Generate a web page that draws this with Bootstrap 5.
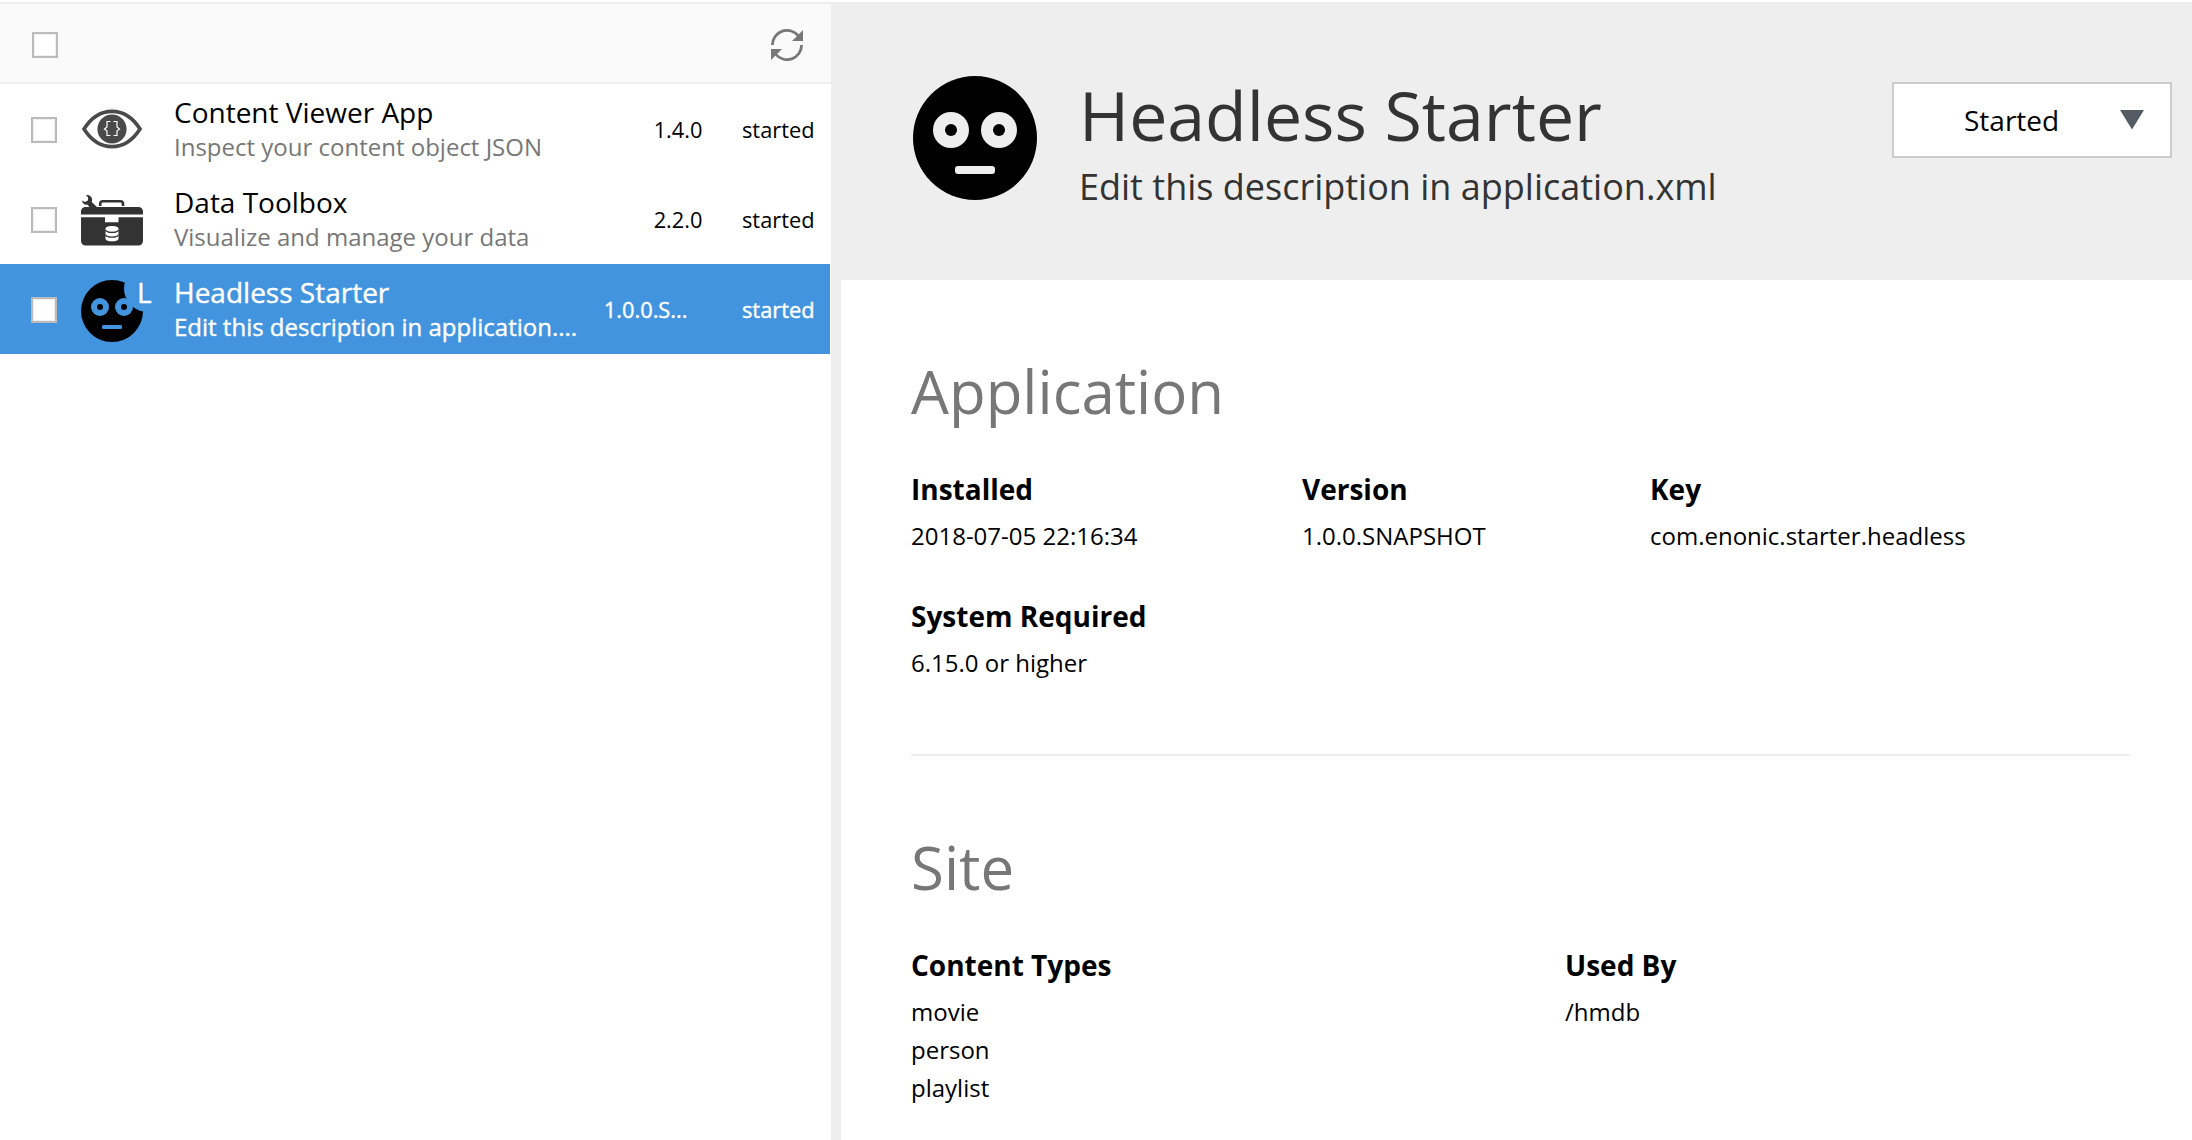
<!DOCTYPE html>
<html lang="en">
<head>
<meta charset="utf-8">
<title>Applications</title>
<link href="https://cdn.jsdelivr.net/npm/bootstrap@5.3.0/dist/css/bootstrap.min.css" rel="stylesheet">
<style>
  body { font-family: "Open Sans", sans-serif; color: #000; height: 1140px; overflow: hidden; background: #fff; }
  .app-frame { height: 1140px; padding-top: 2px; }
  .side-pane { width: 831px; }
  .side-toolbar { height: 82px; background: #fafafa; border-top: 2px solid #eee; border-bottom: 2px solid #eee; padding: 4px 28px 0 32px; }
  .tick-box { width: 26px; height: 26px; border: 2px solid #bbb; background: #fff; box-shadow: inset 0 0 0 1px #f0f0f0; }
  .app-row { height: 90px; width: 830px; padding: 0 15.5px 0 31px; }
  .app-row .tick-box { margin-top: 2px; }
  .app-row.is-selected { background: #4294de; color: #fff; -webkit-text-stroke: .4px #fff; }
  .app-icon { width: 62px; height: 90px; margin-left: 24px; }
  .app-text { width: 406px; margin-left: 31px; margin-bottom: 1px; }
  .app-name { font-size: 28px; line-height: 38px; margin-bottom: -1px; }
  .app-desc { font-size: 24px; line-height: 34px; color: #777; }
  .is-selected .app-desc { color: #fff; }
  .app-version, .app-state { font-size: 21.8px; line-height: 30px; margin-top: 2px; }
  .app-version { margin-left: auto; }
  .app-state { width: 112px; }
  .is-selected .app-state { width: 127px; }
  .local-flag { left: 56px; top: 9px; font-size: 28px; line-height: 38px; }
  .splitter { width: 10px; background: #eee; }
  .detail-head { height: 278px; background: #eee; padding: 74px 20px 0 72px; color: #333; }
  .detail-names { margin-left: 42px; }
  .detail-title { font-size: 68px; line-height: 70px; margin-top: 4px; }
  .detail-sub { font-size: 36px; line-height: 46px; margin-top: 14px; }
  .state-btn { width: 280px; height: 76px; border: 2px solid #ccc; background: #fff; margin-top: 6px; padding: 0 26px 0 70px; font-size: 28px; color: #000; }
  .detail-body { padding: 81px 62px 0 70px; }
  .sec-title { font-size: 60px; line-height: 60px; color: #777; margin-bottom: 49px; }
  .field-name { font-size: 28px; line-height: 38px; font-weight: 700; margin-bottom: 9px; }
  .field-value { font-size: 24px; line-height: 38px; }
  .field-row-next { margin-top: 42px; }
  .sec-rule { height: 2px; background: #eee; margin: 72px 0 81px; }
  .w-a { width: 391px; } .w-b { width: 348px; } .w-c { width: 654px; }
</style>
<script src="https://cdn.jsdelivr.net/npm/bootstrap@5.3.0/dist/js/bootstrap.bundle.min.js"></script>
</head>
<body>
<div class="app-frame d-flex">
  <aside class="side-pane flex-shrink-0">
    <div class="side-toolbar d-flex align-items-center justify-content-between">
      <span class="tick-box"></span>
      <svg width="32" height="32" viewBox="0 0 32 32"><g fill="none" stroke="#777" stroke-width="2.8"><path d="M1.4 16A14.6 14.6 0 0 1 27.5 7"/><path d="M30.6 16A14.6 14.6 0 0 1 4.5 25"/></g><path fill="#777" d="M32 1v11H21zM0 31V20h11z"/></svg>
    </div>
    <div class="app-row d-flex align-items-center">
      <span class="tick-box flex-shrink-0"></span>
      <svg class="app-icon flex-shrink-0" viewBox="0 0 62 90"><path d="M3 45C18 21.500 44 21.500 59 45C44 68.500 18 68.500 3 45z" fill="#fff" stroke="#4a4a4a" stroke-width="3.600"/><circle cx="31" cy="45" r="14.600" fill="#4a4a4a"/><path d="M29.500 37.500h-3.500v5.500l-2.500 2 2.500 2V51.500h3.500M32.500 37.500h3.500v5.500l2.500 2-2.500 2V51.500h-3.500" fill="none" stroke="#fff" stroke-width="1.200"/></svg>
      <div class="app-text"><div class="app-name text-truncate">Content Viewer App</div><div class="app-desc text-truncate">Inspect your content object JSON</div></div>
      <div class="app-version">1.4.0</div><div class="app-state text-end">started</div>
    </div>
    <div class="app-row d-flex align-items-center">
      <span class="tick-box flex-shrink-0"></span>
      <svg class="app-icon flex-shrink-0" viewBox="0 0 62 90"><g fill="#333"><path d="M0 40.500v-3a4.500 4.500 0 0 1 4.500-4.500h53a4.500 4.500 0 0 1 4.500 4.500v3z"/><path d="M0 43.300h24v5h13.500v-5H62V67a4.500 4.500 0 0 1-4.500 4.500h-53A4.500 4.500 0 0 1 0 67z"/><path d="M9.500 34 6.200 30.600C3.500 31 1.300 29.200.9 26.400l3.200 1.600 2.800-1.400.2-3-2-2.400c3.600-.6 6.400 2 6 5.400l-.4 1.500L17 34z"/></g><path d="M19.200 32v-2a2.700 2.700 0 0 1 2.700-2.700h17.400a2.700 2.700 0 0 1 2.700 2.700v2" fill="none" stroke="#333" stroke-width="2.600"/><path d="M24.500 54.500c0-3.500 13-3.500 13 0v10c0 3.800-13 3.800-13 0z" fill="#fff"/><path d="M24.500 56c1 3.200 12 3.200 13 0M24.500 60.800c1 3.200 12 3.200 13 0" fill="none" stroke="#333" stroke-width="1.200"/></svg>
      <div class="app-text"><div class="app-name text-truncate">Data Toolbox</div><div class="app-desc text-truncate">Visualize and manage your data</div></div>
      <div class="app-version">2.2.0</div><div class="app-state text-end">started</div>
    </div>
    <div class="app-row is-selected d-flex align-items-center">
      <span class="tick-box flex-shrink-0"></span>
      <div class="app-icon position-relative flex-shrink-0">
        <svg class="d-block" width="62" height="90" viewBox="0 0 62 90"><circle cx="31" cy="47" r="31"/><circle cx="66.500" cy="24.500" r="23.500" fill="#4294de"/><circle cx="19" cy="43" r="9" fill="#4294de"/><circle cx="43" cy="43" r="9" fill="#4294de"/><circle cx="19" cy="43" r="3"/><circle cx="43" cy="43" r="3"/><rect x="21" y="61" width="20" height="4" rx="1.500" fill="#4294de"/></svg>
        <span class="local-flag position-absolute">L</span>
      </div>
      <div class="app-text"><div class="app-name text-truncate">Headless Starter</div><div class="app-desc text-truncate">Edit this description in application....</div></div>
      <div class="app-version">1.0.0.S...</div><div class="app-state text-end">started</div>
    </div>
  </aside>
  <div class="splitter flex-shrink-0"></div>
  <main class="flex-grow-1">
    <header class="detail-head d-flex align-items-start">
      <svg class="flex-shrink-0" width="124" height="124" viewBox="0 0 124 124"><circle cx="62" cy="62" r="62"/><g fill="#eee"><circle cx="38" cy="54" r="18"/><circle cx="86" cy="54" r="18"/><rect x="42" y="90" width="40" height="8" rx="3"/></g><circle cx="38" cy="54" r="6"/><circle cx="86" cy="54" r="6"/></svg>
      <div class="detail-names flex-grow-1"><div class="detail-title">Headless Starter</div><div class="detail-sub">Edit this description in application.xml</div></div>
      <button class="state-btn d-flex align-items-center justify-content-between flex-shrink-0" type="button"><span>Started</span><svg width="24" height="20" viewBox="0 0 24 20"><path d="M0 0h24L12 19.500z" fill="#555b63"/></svg></button>
    </header>
    <div class="detail-body">
      <div class="sec-title">Application</div>
      <div class="d-flex">
        <div class="w-a"><div class="field-name">Installed</div><div class="field-value">2018-07-05 22:16:34</div></div>
        <div class="w-b"><div class="field-name">Version</div><div class="field-value">1.0.0.SNAPSHOT</div></div>
        <div><div class="field-name">Key</div><div class="field-value">com.enonic.starter.headless</div></div>
      </div>
      <div class="field-row-next"><div class="field-name">System Required</div><div class="field-value">6.15.0 or higher</div></div>
      <div class="sec-rule"></div>
      <div class="sec-title">Site</div>
      <div class="d-flex">
        <div class="w-c"><div class="field-name">Content Types</div><div class="field-value">movie</div><div class="field-value">person</div><div class="field-value">playlist</div></div>
        <div><div class="field-name">Used By</div><div class="field-value">/hmdb</div></div>
      </div>
    </div>
  </main>
</div>
</body>
</html>
